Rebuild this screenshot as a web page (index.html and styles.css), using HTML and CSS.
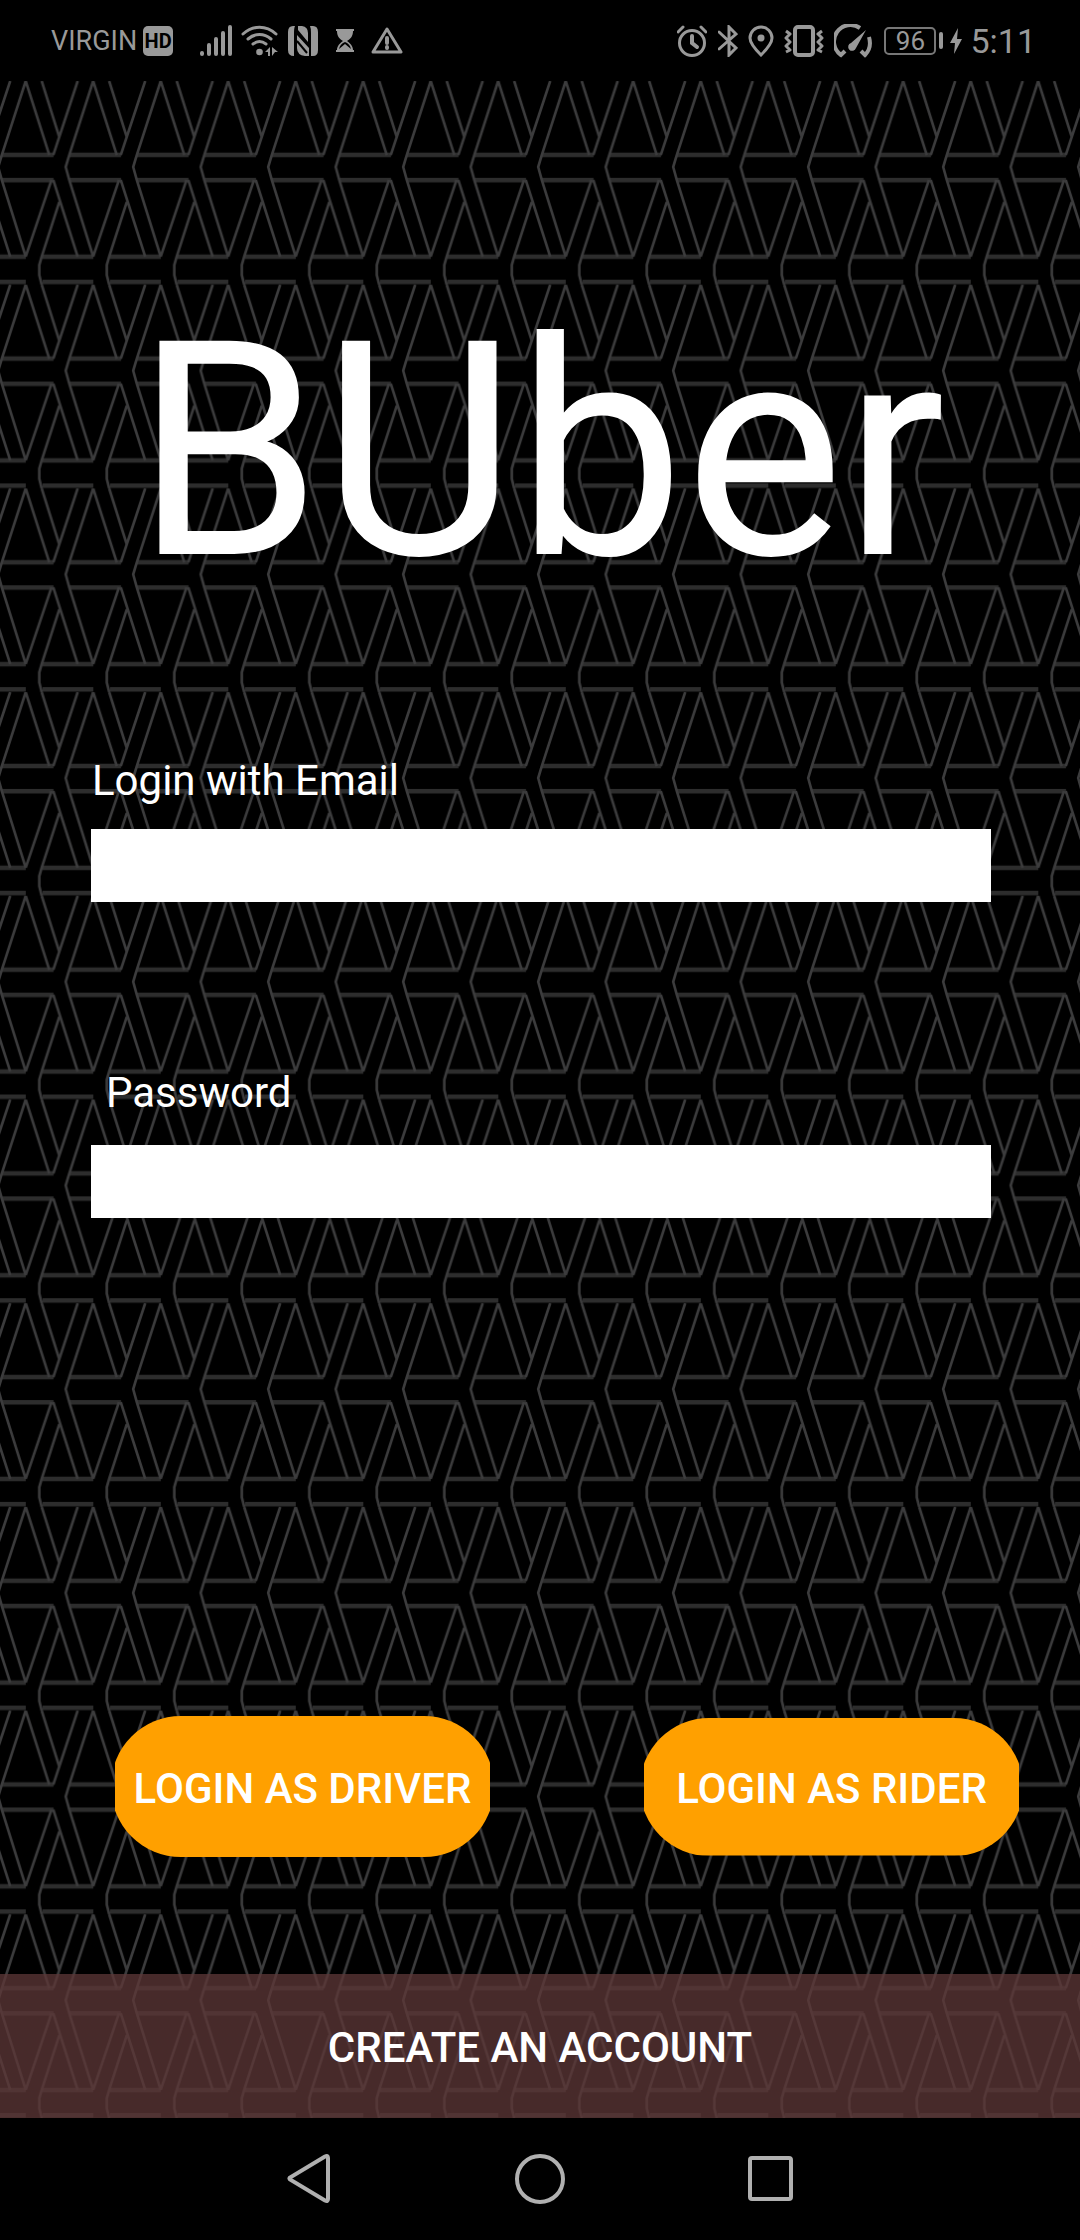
FILE: index.html
```html
<!DOCTYPE html>
<html lang="en">
<head>
<meta charset="utf-8">
<meta name="viewport" content="width=device-width, initial-scale=1">
<title>BUber</title>
<link rel="stylesheet" href="styles.css">
</head>
<body>
<div class="phone">
  <header class="status">
    <div class="status-side">
      <span class="carrier">VIRGIN</span>
      <span class="hd">HD</span>
      <svg class="icon signal" width="34" height="32" viewBox="0 0 34 32" aria-hidden="true"><path d="M3 28v1M10 20v9M17 14v15M24 8v21M31 2v27" fill="none" stroke="currentColor" stroke-width="4" stroke-linecap="round"/></svg>
      <svg class="icon wifi" width="38" height="32" viewBox="0 0 38 32" aria-hidden="true"><g fill="none" stroke="currentColor" stroke-width="3" stroke-linecap="round"><path d="M2 9C12 0 25 0 35 9M7 14c7-6 16-6 23 0M12 19c4-3 9-3 13 0"/></g><circle cx="18.500" cy="27" r="3.300" fill="currentColor"/><path d="M24 27l5-5v9h-2v-4zM31 22l6 5h-3l-3 4z" fill="currentColor"/></svg>
      <svg class="icon nfc" width="32" height="32" viewBox="0 0 32 32" aria-hidden="true"><path d="M6 1h2c-1 2-1 5-1 8v22q-6 0-6-6V7q0-6 5-6zM11 1h4q6 1 6 7v9L11 5zM10 10l12 13v8h-4q-8-1-8-8zM23 1h3q5 0 5 6v18q0 6-5 6h-2V8q0-5-1-7z" fill="currentColor"/><path d="M10 16l10 12" stroke="#000" stroke-width="2"/></svg>
      <svg class="icon glass" width="18" height="24" viewBox="0 0 18 24" aria-hidden="true"><path d="M0 0h18v2h-1c0 6-3 8-6 10 3 2 6 5 6 9h1v2H0v-2h1c0-4 3-7 6-9C4 10 1 8 1 2H0z" fill="currentColor"/><path d="M3 20c1-4 3-6 6-7 3 1 5 3 6 7l-6-5z" fill="#000"/></svg>
      <svg class="icon" width="32" height="28" viewBox="0 0 32 28" aria-hidden="true"><path d="M16 2L30 25H2z" fill="none" stroke="currentColor" stroke-width="3" stroke-linejoin="round"/><path d="M16 11v5M16 20v1" stroke="currentColor" stroke-width="4" stroke-linecap="round"/></svg>
    </div>
    <div class="status-side">
      <svg class="icon" width="30" height="32" viewBox="0 0 30 32" aria-hidden="true"><g fill="none" stroke="currentColor" stroke-width="3" stroke-linecap="round"><circle cx="15" cy="18" r="12.500"/><path d="M1 7l5-5M29 7l-5-5"/><path d="M15 11v7l5 4" stroke-width="4"/></g></svg>
      <svg class="icon bt" width="20" height="32" viewBox="0 0 20 32" aria-hidden="true"><path d="M1 7l17 16-7 7V2l7 7L1 24" fill="none" stroke="currentColor" stroke-width="3" stroke-linecap="round"/></svg>
      <svg class="icon pin" width="26" height="32" viewBox="0 0 26 32" aria-hidden="true"><path d="M13 30C6 23 2 18 2 13a11 11 0 0 1 22 0c0 5-4 10-11 17z" fill="none" stroke="currentColor" stroke-width="3"/><circle cx="13" cy="13" r="3.500" fill="currentColor"/></svg>
      <svg class="icon vib" width="40" height="32" viewBox="0 0 40 32" aria-hidden="true"><rect x="11" y="2" width="18" height="28" rx="3" fill="none" stroke="currentColor" stroke-width="4"/><path d="M2 6l4 3-4 4 4 4-4 4 4 4-4 2M38 6l-4 3 4 4-4 4 4 4-4 4 4 2" fill="none" stroke="currentColor" stroke-width="3" stroke-linejoin="round"/></svg>
      <svg class="icon gauge" width="38" height="34" viewBox="0 0 38 34" aria-hidden="true"><path d="M26 4A16 16 0 0 0 7 31l4-4M35 13c2 7 1 13-4 18l-4-4" fill="none" stroke="currentColor" stroke-width="4"/><path d="M32 6L22 24a4 4 0 1 1-5-5z" fill="currentColor"/></svg>
      <span class="battery">96</span><span class="battery-tip"></span>
      <svg class="icon bolt" width="12" height="26" viewBox="0 0 12 26" aria-hidden="true"><path d="M8 0L0 15h5L4 26l8-15H7z" fill="currentColor"/></svg>
      <span class="clock">5:11</span>
    </div>
  </header>

  <main class="screen">
    <h1 class="title">BUber</h1>
    <form class="login">
      <label class="label" for="email">Login with Email</label>
      <input class="field" id="email" type="email">
      <label class="label label-password" for="password">Password</label>
      <input class="field field-password" id="password" type="password">
      <div class="actions">
        <button class="pill pill-driver" type="submit">LOGIN AS DRIVER</button>
        <button class="pill pill-rider" type="submit">LOGIN AS RIDER</button>
      </div>
    </form>
    <button class="create" type="button">CREATE AN ACCOUNT</button>
  </main>

  <nav class="nav">
    <button class="nav-button" type="button" aria-label="Back"><svg width="46" height="52" viewBox="0 0 46 52"><path d="M4 26.500Q3 25.500 4 24.500L39 3.500Q42 2 42 5V46Q42 49 39 47.500Z" fill="none" stroke="currentColor" stroke-width="4"/></svg></button>
    <button class="nav-button" type="button" aria-label="Home"><svg width="52" height="52" viewBox="0 0 52 52"><circle cx="26" cy="26" r="23" fill="none" stroke="currentColor" stroke-width="4"/></svg></button>
    <button class="nav-button" type="button" aria-label="Recent apps"><svg width="46" height="52" viewBox="0 0 46 52"><rect x="2" y="5" width="41" height="41" rx="2" fill="none" stroke="currentColor" stroke-width="4"/></svg></button>
  </nav>
</div>
</body>
</html>
```

FILE: styles.css
```css
* {
  box-sizing: border-box;
}

body {
  margin: 0;
  background: #000;
  color: #fff;
  font-family: Roboto, sans-serif;
}

button {
  border: 0;
  padding: 0;
  color: inherit;
  font: inherit;
}

.phone {
  display: flex;
  flex-direction: column;
  min-height: 100vh;
}

/* Status bar */
.status {
  display: flex;
  justify-content: space-between;
  height: 81px;
  padding: 0 44px 0 51px;
  color: #999;
}

.status-side {
  display: flex;
  align-items: center;
}

.icon {
  flex: none;
}

.carrier {
  font-size: 27px;
}

.hd {
  width: 30px;
  margin-left: 6px;
  border-radius: 5px;
  background: #999;
  color: #000;
  font-size: 20px;
  font-weight: 700;
  line-height: 30px;
  text-align: center;
}

.signal {
  margin-left: 26px;
}

.wifi {
  margin-left: 8px;
}

.nfc {
  margin-left: 8px;
}

.glass {
  margin: 0 17px;
}

.bt {
  margin-left: 11px;
}

.pin {
  margin-left: 10px;
}

.vib {
  margin-left: 10px;
}

.gauge {
  margin-left: 10px;
}

.battery {
  width: 52px;
  margin-left: 12px;
  border: 2px solid #777;
  border-radius: 5px;
  font-size: 26px;
  line-height: 24px;
  text-align: center;
}

.battery-tip {
  width: 4px;
  height: 17px;
  margin-left: 3px;
  border-radius: 2px;
  background: #999;
}

.bolt {
  margin: 0 8px 0 7px;
}

.clock {
  font-size: 34px;
}

/* Login screen */
.screen {
  display: flex;
  flex: 1;
  flex-direction: column;
  background: #000 url("data:image/svg+xml,%3Csvg xmlns='http://www.w3.org/2000/svg' viewBox='0 0 1080 2037' preserveAspectRatio='none'%3E%3Cdefs%3E%3Cg id='g' fill='none'%3E%3Cpath d='M1.800 74H53.500M1.800 99H53.500M42.700 175.700H93.300M42.700 201H93.300' stroke='%232d2d2d' stroke-width='4.500'/%3E%3Cpath d='M93.200 0L69.300 74 65.700 86 69.300 99 93.200 175.700M25.700 0L49.300 74M41.700 0L59.300 56M77.700 0L53.300 74M53.300 99L77.700 175.700M51.500 99L25.700 175.700M59.300 121L41.700 175.700 39.300 184V194L41.700 203.700' stroke='%233c3c3d' stroke-width='2.600'/%3E%3C/g%3E%3Cpattern id='p' width='67.500' height='203.700' patternUnits='userSpaceOnUse'%3E%3Cuse href='%23g'/%3E%3Cuse href='%23g' x='-67.500'/%3E%3C/pattern%3E%3C/defs%3E%3Crect width='1080' height='2037' fill='url(%23p)'/%3E%3C/svg%3E") 0 0 / 100% 100% no-repeat;
}

.title {
  margin: 195px 0 0;
  font-size: 300px;
  font-weight: 400;
  line-height: 352px;
  text-align: center;
}

.login {
  display: flex;
  flex-direction: column;
  margin-top: 128px;
}

.label {
  margin: 0 92px;
  font-size: 42px;
  line-height: 50px;
}

.label-password {
  margin: 166px 106px 0;
}

.field {
  height: 73px;
  margin: 23px 89px 0 91px;
  border: 0;
  padding: 0 16px;
  background: #fff;
  color: #000;
  font: 42px Roboto, sans-serif;
}

.field-password {
  margin-top: 27px;
}

.actions {
  display: flex;
  align-items: center;
  justify-content: space-between;
  margin: 498px 57px 0 111px;
}

/* Pills have their outermost curve trimmed flat */
.pill {
  width: 383px;
  padding-top: 4px;
  border-radius: 70px;
  background: #ffa000;
  clip-path: inset(0 4px);
  font-size: 42px;
  font-weight: 500;
}

.pill-driver {
  height: 141px;
}

.pill-rider {
  height: 138px;
}

.create {
  height: 144px;
  margin-top: auto;
  padding-top: 3px;
  background: rgba(93, 55, 55, 0.76);
  font-size: 42px;
  font-weight: 500;
}

/* System navigation */
.nav {
  display: flex;
  justify-content: space-between;
  padding: 35px 286px;
  color: #b0b0b0;
}

.nav-button {
  height: 52px;
  background: none;
}

.nav-button svg {
  display: block;
}
```
